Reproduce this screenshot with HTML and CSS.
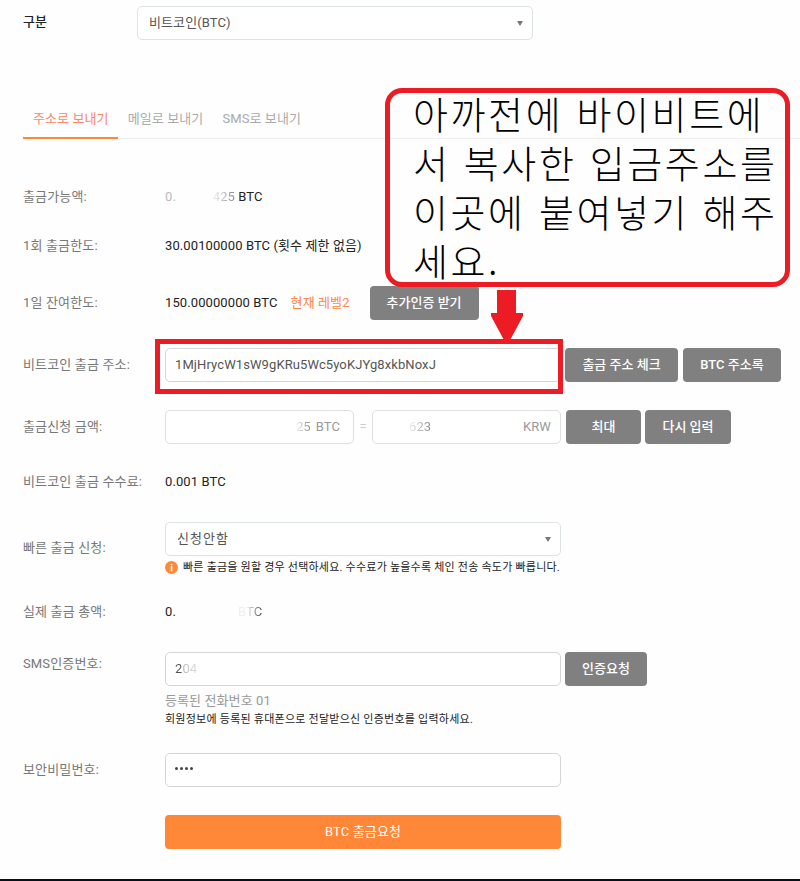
FILE: index.html
```html
<!DOCTYPE html>
<html lang="ko">
  <head>
    <meta charset="UTF-8" />
    <meta name="viewport" content="width=device-width, initial-scale=1.0" />
    <title>BTC 출금</title>
    <link rel="stylesheet" href="styles.css">
  </head>
  <body>
    <div class="page">
      <div class="coin-row">
        <div class="coin-label">구분</div>
        <div class="field select">
          <span>비트코인(BTC)</span>
          <span class="caret"></span>
        </div>
      </div>

      <div class="tabs">
        <div class="tab active">주소로 보내기</div>
        <div class="tab">메일로 보내기</div>
        <div class="tab">SMS로 보내기</div>
      </div>

      <div class="form">
        <div class="row">
          <div class="label">출금가능액:</div>
          <div class="value"><span class="masked available"><span class="faint">0.</span><span class="fade">425</span></span> BTC</div>
        </div>

        <div class="row once">
          <div class="label">1회 출금한도:</div>
          <div class="value">30.00100000 BTC (횟수 제한 없음)</div>
        </div>

        <div class="row daily">
          <div class="label">1일 잔여한도:</div>
          <div class="value">150.00000000 BTC</div>
          <div class="level">현재 레벨2</div>
          <button class="btn btn-verify">추가인증 받기</button>
        </div>

        <div class="row wide">
          <div class="label">비트코인 출금 주소:</div>
          <div class="field">1MjHrycW1sW9gKRu5Wc5yoKJYg8xkbNoxJ</div>
          <button class="btn btn-check">출금 주소 체크</button>
          <button class="btn btn-book">BTC 주소록</button>
        </div>

        <div class="row wide">
          <div class="label">출금신청 금액:</div>
          <div class="field amount btc"><span class="fade">25</span><span class="unit">BTC</span></div>
          <div class="equals">=</div>
          <div class="field amount krw"><span class="fade">623</span><span class="unit">KRW</span></div>
          <button class="btn btn-max">최대</button>
          <button class="btn btn-retry">다시 입력</button>
        </div>

        <div class="row fee">
          <div class="label">비트코인 출금 수수료:</div>
          <div class="value">0.001 BTC</div>
        </div>

        <div class="row fast">
          <div class="label">빠른 출금 신청:</div>
          <div class="stack">
            <div class="field select speed">
              <span>신청안함</span>
              <span class="caret"></span>
            </div>
            <div class="hint">
              <svg class="info" viewBox="0 0 13 13" width="13" height="13">
                <circle cx="6.5" cy="6.5" r="6.5" fill="#ff8737" />
                <rect x="5.7" y="2.8" width="1.7" height="1.6" fill="#fff" />
                <rect x="5.7" y="5.3" width="1.7" height="5" fill="#fff" />
              </svg>
              <span>빠른 출금을 원할 경우 선택하세요. 수수료가 높을수록 체인 전송 속도가 빠릅니다.</span>
            </div>
          </div>
        </div>

        <div class="row total">
          <div class="label">실제 출금 총액:</div>
          <div class="value"><span class="masked sum">0.</span><span class="fade-btc">BTC</span></div>
        </div>

        <div class="row sms">
          <div class="label">SMS인증번호:</div>
          <div class="stack">
            <div class="field"><span class="fade-out">204</span></div>
            <div class="phone">등록된 전화번호 01</div>
            <div class="note">회원정보에 등록된 휴대폰으로 전달받으신 인증번호를 입력하세요.</div>
          </div>
          <button class="btn btn-sms">인증요청</button>
        </div>

        <div class="row wide pin">
          <div class="label">보안비밀번호:</div>
          <div class="field"><span class="dots"><i></i><i></i><i></i><i></i></span></div>
        </div>

        <button class="submit">BTC 출금요청</button>
      </div>

      <div class="bottom-bar"></div>

      <!-- guide marks over the form -->
      <div class="callout">
        <p>아까전에 바이비트에<br>서 복사한 입금주소를<br>이곳에 붙여넣기 해주<br>세요.</p>
      </div>
      <svg class="arrow" viewBox="0 0 34 52" width="34" height="52">
        <path d="M7 0H26V23H33V26L19 52H15L1 26V23H7Z" fill="#ed1c24" />
      </svg>
      <div class="highlight"></div>
    </div>
  </body>
</html>
```
FILE: styles.css
```css
* {
  margin: 0;
  padding: 0;
  box-sizing: border-box;
}

body {
  background-color: #fefefe;
  font-family: Roboto, "Noto Sans CJK KR", sans-serif;
  font-size: 13px;
  line-height: 20px;
  letter-spacing: 0.1px;
  color: #222;
  overflow: hidden;
}

.page {
  position: relative;
  display: flex;
  flex-direction: column;
  width: 800px;
  height: 881px;
  padding-top: 6px;
  white-space: nowrap;
}

.coin-row {
  display: flex;
  align-items: center;
  padding-left: 23px;
}

.coin-label {
  width: 114px;
  font-weight: 500;
  padding-bottom: 3px;
}

.field {
  display: flex;
  align-items: center;
  width: 396px;
  height: 34px;
  flex-shrink: 0;
  padding: 0 9px 1px;
  border: 1px solid #d3d6d8;
  border-radius: 5px;
  background-color: #fff;
  color: #555;
}

.select {
  justify-content: space-between;
  padding: 0 9px 0 11px;
  border-color: #dde2e2;
}

.caret {
  border: 3px solid transparent;
  border-top: 5px solid #777;
  border-bottom: 0;
}

.tabs {
  display: flex;
  height: 43px;
  margin: 56px 0 0 23px;
  border-bottom: 1px solid #eee;
}

.tab {
  padding: 13px 9px 0 10px;
  height: 43px;
  color: #aaa;
}

.tab.active {
  color: #ff8763;
  border-bottom: 2px solid #ff8737;
}

.form {
  padding: 41px 0 0 23px;
}

.row {
  display: flex;
  align-items: center;
  height: 34px;
}

.row.once { margin-top: 15px; }
.row.daily { margin-top: 23px; }
.row.wide { margin-top: 28px; }
.row.fee { margin-top: 21px; }
.row.fast { margin-top: 23px; height: 52px; }
.row.total { margin-top: 21px; }
.row.sms { margin-top: 23px; height: 73px; align-items: flex-start; }

.label {
  width: 142px;
  flex-shrink: 0;
  color: #777;
  letter-spacing: 0.15px;
}

.sms .label { padding-top: 2px; }

.masked {
  display: inline-flex;
  justify-content: space-between;
}

.available { width: 70px; }
.sum { width: 73px; }

.faint { color: #bbb; }

.fade {
  color: transparent;
  background: linear-gradient(90deg, #f0f0f0, #888);
  background-clip: text;
}

.fade-btc {
  color: transparent;
  background: linear-gradient(90deg, #eee 40%, #444);
  background-clip: text;
}

.fade-out {
  color: transparent;
  background: linear-gradient(90deg, #555 25%, #bbb 40%, #ddd);
  background-clip: text;
}

.level {
  margin-left: 13px;
  color: #ff8748;
}

.btn {
  height: 34px;
  flex-shrink: 0;
  padding-bottom: 4px;
  border: none;
  border-radius: 4px;
  background-color: #808080;
  color: #fff;
  font: 500 13px Roboto, "Noto Sans CJK KR", sans-serif;
}

.btn-verify { width: 109px; margin-left: 20px; }
.btn-check { width: 113px; margin-left: 4px; }
.btn-book { width: 98px; margin-left: 5px; }
.btn-max { width: 75px; margin-left: 5px; }
.btn-retry { width: 86px; margin-left: 4px; }
.btn-sms { width: 82px; margin-left: 4px; }

.amount {
  width: 189px;
  padding-right: 13px;
  border-color: #dde0e0;
}

.btc { justify-content: flex-end; }

.krw {
  justify-content: space-between;
  padding: 0 9px 1px 36px;
}

.unit {
  margin-left: 5px;
  color: #999;
}

.equals {
  width: 18px;
  text-align: center;
  color: #ccc;
}

.speed {
  letter-spacing: 1px;
}

.hint {
  display: flex;
  align-items: center;
  gap: 5px;
  height: 23px;
  font-size: 11px;
  letter-spacing: 0.22px;
}

.fast .stack {
  height: 52px;
}

.phone {
  height: 18px;
  margin-top: 5px;
  color: #999;
}

.note {
  height: 16px;
  font-size: 11px;
  line-height: 21px;
  letter-spacing: 0.24px;
}

.dots {
  display: flex;
  gap: 2px;
  padding-bottom: 2px;
}

.dots i {
  width: 3px;
  height: 3px;
  border-radius: 50%;
  background-color: #444;
}

.submit {
  display: block;
  width: 396px;
  height: 34px;
  margin: 28px 0 0 142px;
  padding-bottom: 4px;
  border: none;
  border-radius: 4px;
  background-color: #ff8737;
  color: #fff;
  font: 400 13px Roboto, "Noto Sans CJK KR", sans-serif;
  letter-spacing: 0.15px;
}

.bottom-bar {
  height: 2px;
  margin-top: auto;
  background-color: #06121b;
}

.callout {
  position: absolute;
  left: 385px;
  top: 88px;
  width: 405px;
  height: 199px;
  padding-left: 23px;
  border: 5px solid #ed1c24;
  border-radius: 17px;
}

.callout p {
  margin-top: -5px;
  color: #000;
  font-family: "Noto Sans CJK KR", sans-serif;
  font-size: 38px;
  font-weight: 300;
  line-height: 49px;
  letter-spacing: 2.6px;
}

.arrow {
  position: absolute;
  left: 490px;
  top: 290px;
}

.highlight {
  position: absolute;
  left: 155px;
  top: 339px;
  width: 408px;
  height: 55px;
  border: 5px solid #ed1c24;
}
```
